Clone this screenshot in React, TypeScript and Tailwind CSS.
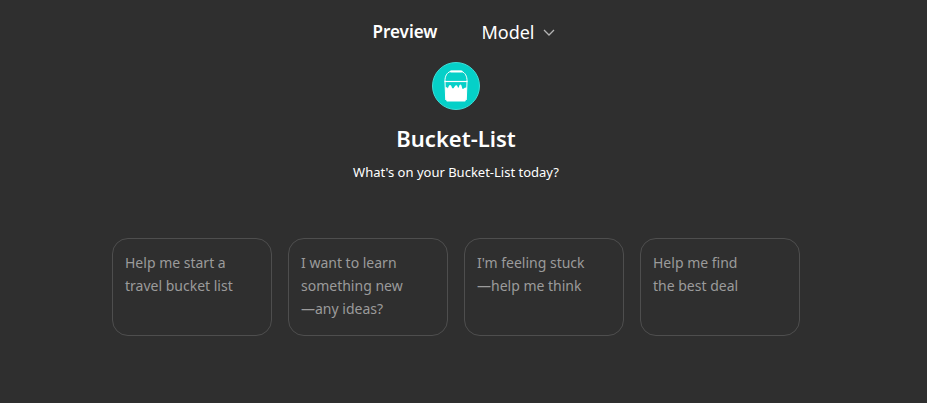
import { useState } from 'react';

const starters = [
  'Help me start a\ntravel bucket list',
  'I want to learn\nsomething new\n—any ideas?',
  "I'm feeling stuck\n—help me think",
  'Help me find\nthe best deal',
];

function BucketLogo() {
  return (
    <svg viewBox="0 0 48 48" className="size-12" role="img" aria-label="Bucket-List logo">
      <circle cx="24" cy="24" r="23.5" fill="#05d0c8" stroke="#3fdcd6" />
      <path d="M13 20v-2.500C13.500 12.500 16 9.800 19.500 9.200h9c3.500.6 6 3.300 6.500 8.300V20" fill="none" stroke="#fff" strokeWidth="1" />
      <path d="M19 9.500h10.500" stroke="#fff" strokeWidth="2.200" strokeLinecap="round" />
      <path d="M12.500 19.500h23" stroke="#fff" strokeWidth="1.200" />
      <path d="M13 20l.7 18M35 20l-.7 18" stroke="#fff" strokeWidth="1" />
      <path
        d="M13.200 25.500c1.500-.5 2.400.2 2.700 1 .5-1.500.9-3.500 2.300-3.500 1.500 0 1.200 2.500 2.300 3.300.9.500 1.300-.6 2-1.600.9-1.700 2.300-2.100 2.900-.6.400.9.300 1.700 1 1.700.8 0 .6-3.200 2.100-3.200s1.300 4.500 2.400 4.500c.9 0 1.100-1.800 3.900-1.500l-.9 12.400c-.1.900-.5 1.500-1.400 1.500H15.500c-.9 0-1.300-.6-1.400-1.500z"
        fill="#fff"
      />
    </svg>
  );
}

function App() {
  const [prompt, setPrompt] = useState<string | null>(null);

  return (
    <div className="min-h-screen bg-[#2f2f2f] font-['Noto_Sans',sans-serif] text-white">
      {/* Header */}
      <header className="flex items-center justify-center gap-11 pt-4 pl-0.5">
        <h2 className="text-[17px] leading-8 font-semibold">Preview</h2>
        <button type="button" className="flex items-center gap-1.5 text-lg leading-8">
          Model
          <svg viewBox="0 0 16 16" className="size-4" fill="none" stroke="#b4b4b4" strokeWidth="1.300">
            <path d="M3 6l5 5 5-5" />
          </svg>
        </button>
      </header>

      {/* Preview */}
      <main className="flex flex-col items-center pt-3.5 pr-4 pl-px">
        <BucketLogo />
        <h1 className="mt-2.5 text-[22px] leading-9 font-semibold">Bucket-List</h1>
        <p className="mt-1.5 text-[13px] leading-5">What's on your Bucket-List today?</p>

        <div className="mt-14 flex items-stretch justify-center gap-4">
          {starters.map((starter) => (
            <button
              key={starter}
              type="button"
              aria-pressed={prompt === starter}
              onClick={() => setPrompt(starter)}
              className="flex w-40 items-start rounded-2xl border border-[#4e4e4e] px-3 pt-3 pb-[15px] text-left text-sm leading-[23px] whitespace-pre-line text-[#9b9b9b] hover:bg-[#383838]"
            >
              {starter}
            </button>
          ))}
        </div>
      </main>
    </div>
  );
}

export default App;
